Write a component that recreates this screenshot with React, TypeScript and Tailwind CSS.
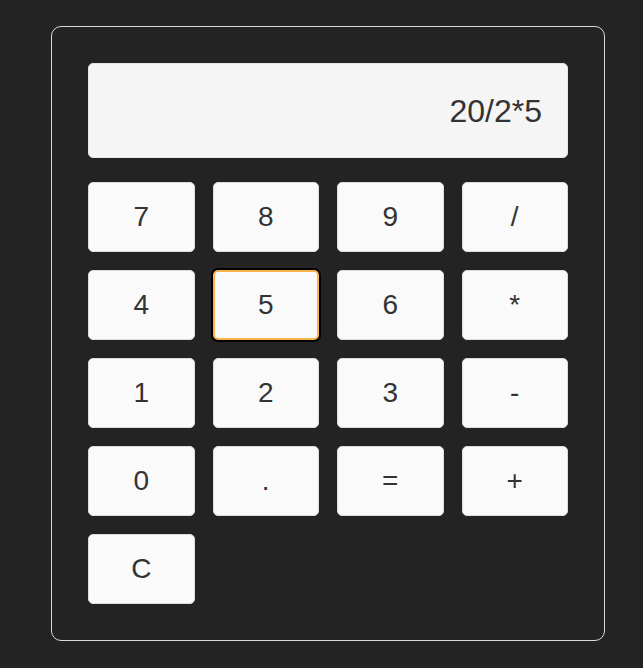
const keys = ["7", "8", "9", "/", "4", "5", "6", "*", "1", "2", "3", "-", "0", ".", "=", "+", "C"];

export default function App() {
  return (
    <div className="min-h-[668px] bg-[#232323] pt-[26px] pl-[51px]" style={{ fontFamily: "'Liberation Sans', Arial, sans-serif" }}>
      <div className="w-[554px] rounded-[10px] border border-[#d9d9d9] p-9">
        <div className="flex h-[95px] items-center justify-end rounded-[5px] border border-[#e4e4e4] bg-[#f5f5f5] pr-[25px] text-[32px] text-[#333]">
          20/2*5
        </div>
        <div className="mt-[24px] grid grid-cols-4 gap-[18px]">
          {keys.map((k) => (
            <button
              key={k}
              className={
                k === "5"
                  ? "h-[70px] rounded-[5px] border-2 border-[#f6b44b] bg-[#fafafa] text-[28px] text-[#333] ring-2 ring-black"
                  : "h-[70px] rounded-[5px] border border-[#dcdcdc] bg-[#fafafa] text-[28px] text-[#333]"
              }
            >
              {k}
            </button>
          ))}
        </div>
      </div>
    </div>
  );
}
